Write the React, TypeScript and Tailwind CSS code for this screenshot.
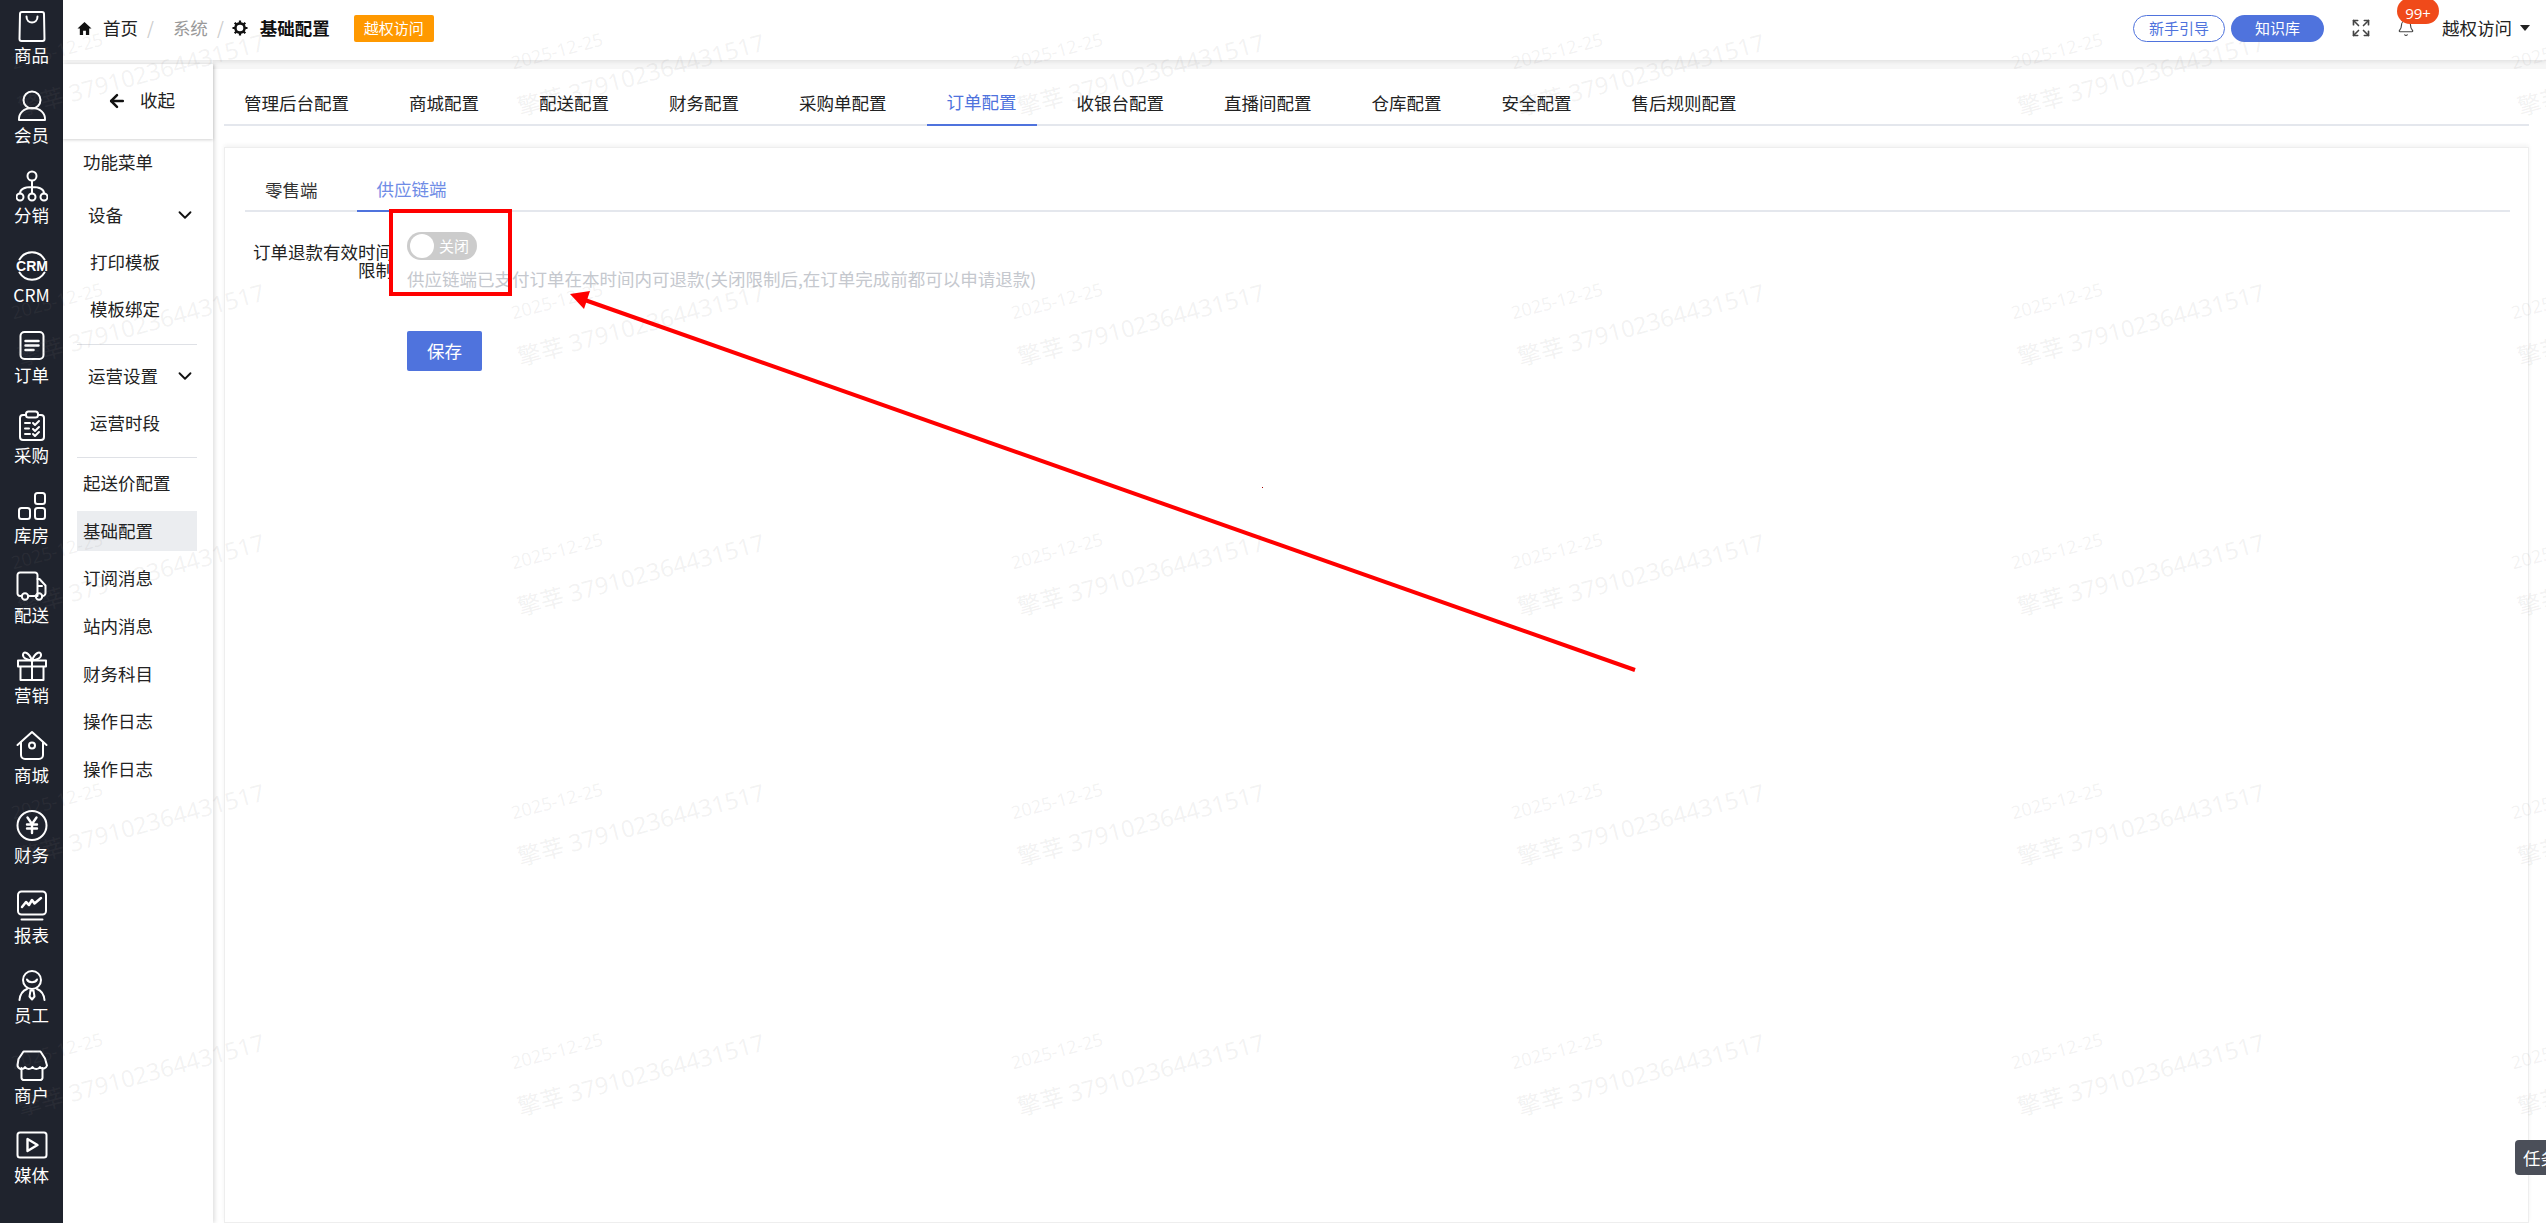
// App.tsx
// Order settings page: dark icon rail, settings menu, tabs and a refund toggle form
import type { ReactNode } from "react";
import { ArrowLeft, Bell, ChevronDown, Expand } from "lucide-react";

const FONT = "font-['Noto_Sans_CJK_SC','Noto_Sans',sans-serif]";

function Icon({ children }: { children: ReactNode }) {
  return (
    <svg
      viewBox="0 0 32 32"
      className="w-8 h-8"
      fill="none"
      stroke="#fff"
      strokeWidth="2"
      strokeLinecap="round"
      strokeLinejoin="round"
    >
      {children}
    </svg>
  );
}

const railItems: { label: string; icon: ReactNode }[] = [
  {
    label: "商品",
    icon: (
      <>
        <path d="M6 2h20a2 2 0 0 1 2 2l.5 25a2 2 0 0 1-2 2h-21a2 2 0 0 1-2-2L4 4a2 2 0 0 1 2-2z" />
        <path d="M10.500 6.500c0 8 11 8 11 0" />
      </>
    ),
  },
  {
    label: "会员",
    icon: (
      <>
        <circle cx="16" cy="10" r="8.500" />
        <path d="M3 30c-.5-7 5-12 13-12s13.500 5 13 12z" />
      </>
    ),
  },
  {
    label: "分销",
    icon: (
      <>
        <circle cx="16" cy="6" r="4.500" />
        <circle cx="4" cy="27" r="3.500" />
        <circle cx="16" cy="27" r="3.500" />
        <circle cx="28" cy="27" r="3.500" />
        <path d="M16 11v12.500M4 23.500c0-5 4-6.500 12-6.500s12 1.500 12 6.500" />
      </>
    ),
  },
  {
    label: "CRM",
    icon: (
      <>
        <path d="M3.500 9.500a14.500 14.500 0 0 1 25 0M3.500 22.500a14.500 14.500 0 0 0 25 0" />
        <text
          x="16"
          y="20.500"
          textAnchor="middle"
          fill="#fff"
          stroke="none"
          fontSize="14"
          fontWeight="700"
          fontFamily="'Liberation Sans',sans-serif"
        >
          CRM
        </text>
      </>
    ),
  },
  {
    label: "订单",
    icon: (
      <>
        <rect x="4.500" y="2" width="23" height="27" rx="4" />
        <path d="M9.500 11h13M9.500 15.500h13M9.500 20h8" strokeWidth="2.500" />
      </>
    ),
  },
  {
    label: "采购",
    icon: (
      <>
        <path d="M10 5H7a3 3 0 0 0-3 3v19a3 3 0 0 0 3 3h18a3 3 0 0 0 3-3V8a3 3 0 0 0-3-3h-3" />
        <rect x="10" y="1.500" width="12" height="6" rx="2.500" />
        <path d="M9 13h5M9 18.500h4M9 24h5M17 13l2 2 4-4M17 19l2 2 4-4M17 24l2 2 4-4" />
      </>
    ),
  },
  {
    label: "库房",
    icon: (
      <>
        <rect x="3" y="18" width="11" height="11" rx="2.500" />
        <rect x="19" y="18" width="10" height="11" rx="2.500" />
        <rect x="19" y="3" width="10" height="11" rx="2.500" />
      </>
    ),
  },
  {
    label: "配送",
    icon: (
      <>
        <path d="M6 26H4a2.500 2.500 0 0 1-2.500-2.500V5A2.500 2.500 0 0 1 4 2.500h15a2.500 2.500 0 0 1 2.500 2.500v21H12" />
        <path d="M21.500 9h2l6 6.500V23a3 3 0 0 1-3 3H26" />
        <path d="M22 16h4" />
        <circle cx="9" cy="26.500" r="3.200" />
        <circle cx="23" cy="26.500" r="3.200" />
      </>
    ),
  },
  {
    label: "营销",
    icon: (
      <>
        <path d="M2 10.500h28v6H2zM4.500 16.500V30h23V16.500M16 10.500V30" />
        <path d="M16 10.500C11 10 6.500 8 7 4.500S13 2 16 10.500zM16 10.500C21 10 25.500 8 25 4.500S19 2 16 10.500z" />
      </>
    ),
  },
  {
    label: "商城",
    icon: (
      <>
        <path d="M1.500 15 16 2l14.500 13" />
        <path d="M5 12.500V25a4 4 0 0 0 4 4h14a4 4 0 0 0 4-4V12.500" />
        <circle cx="16" cy="15.500" r="3" />
      </>
    ),
  },
  {
    label: "财务",
    icon: (
      <>
        <circle cx="16" cy="15.500" r="14.500" />
        <path d="M11.500 7.500 16 14l4.500-6.500M11 14.500h10M11 18.500h10M16 14v9" strokeWidth="2.400" />
      </>
    ),
  },
  {
    label: "报表",
    icon: (
      <>
        <rect x="2" y="1.500" width="28" height="23" rx="3.500" />
        <path d="M6 17l4-5 3 3 3-5 2.500 3.500L25 8" strokeWidth="2.500" />
        <path d="M5.500 29.500h21" />
      </>
    ),
  },
  {
    label: "员工",
    icon: (
      <>
        <circle cx="16" cy="10" r="9" />
        <path d="M11 9.500c1.500 3.500 8.500 3.500 10 0" />
        <path d="M3.500 30c.5-5 3.500-9.500 7.500-11M28.500 30c-.5-5-3.500-9.500-7.500-11" />
        <path d="M14.500 20.500h3l1 6-2.500 3-2.500-3z" />
      </>
    ),
  },
  {
    label: "商户",
    icon: (
      <>
        <path d="M7.500 1.500h17l4.500 7 2 7a4 4 0 0 1-7 1.500 4.500 4.500 0 0 1-7.500 0 4.500 4.500 0 0 1-7.500 0A4 4 0 0 1 1.500 15l1-6z" />
        <path d="M5.500 18v10a2.500 2.500 0 0 0 2.500 2h16a2.500 2.500 0 0 0 2.500-2V18" />
      </>
    ),
  },
  {
    label: "媒体",
    icon: (
      <>
        <rect x="1.500" y="2.500" width="29" height="25" rx="2.500" />
        <path d="M11.500 9v12l10-6z" strokeWidth="2.400" />
      </>
    ),
  },
];

const topTabs = [
  "管理后台配置",
  "商城配置",
  "配送配置",
  "财务配置",
  "采购单配置",
  "订单配置",
  "收银台配置",
  "直播间配置",
  "仓库配置",
  "安全配置",
  "售后规则配置",
];

const lowerMenu = ["起送价配置", "基础配置", "订阅消息", "站内消息", "财务科目", "操作日志", "操作日志"];

function Rail() {
  return (
    <aside className="w-[63px] shrink-0 bg-[#1f232d] flex flex-col text-white">
      {railItems.map((item) => (
        <div key={item.label} className="h-20 shrink-0 pt-[10px] flex flex-col items-center">
          <Icon>{item.icon}</Icon>
          <span className="mt-1 text-[17.5px] leading-[18px] whitespace-nowrap">{item.label}</span>
        </div>
      ))}
    </aside>
  );
}

function Header() {
  return (
    <header className="relative z-20 h-[60px] shrink-0 bg-white shadow-[0_2px_4px_rgba(0,0,0,0.08)] flex items-center pb-1 pl-[14px] pr-4 text-[17.5px] text-[#222]">
      <svg viewBox="0 0 16 16" className="w-[15px] h-[15px]" fill="#111">
        <path d="M8 1 .5 8H3v7h3.500v-4.500h3V15H13V8h2.500z" />
      </svg>
      <span className="ml-[11px]">首页</span>
      <span className="ml-[9px] text-[#ccc]">/</span>
      <span className="ml-[19px] text-[#999]">系统</span>
      <span className="ml-[9px] text-[#ccc]">/</span>
      {/* Round cog with eight short teeth */}
      <svg viewBox="0 0 16 16" className="ml-[8px] w-4 h-4" fill="none" stroke="#111">
        <circle cx="8" cy="8" r="4.600" strokeWidth="2.600" />
        <path
          d="M8 .5v2.500M8 13v2.500M.5 8H3M13 8h2.500M2.700 2.700l1.800 1.800M11.500 11.500l1.800 1.800M13.300 2.700l-1.800 1.800M4.500 11.500l-1.800 1.800"
          strokeWidth="2.200"
        />
      </svg>
      <span className="ml-3 font-bold text-[#111]">基础配置</span>
      <span className="ml-6 w-20 h-[27px] rounded-[2px] bg-[#ff9900] text-white text-[15px] flex items-center justify-center">
        越权访问
      </span>

      <div className="ml-auto flex items-center">
        <span className="w-[92px] h-[27px] rounded-full border border-[#4f73dd] text-[#4f73dd] text-[15px] flex items-center justify-center">
          新手引导
        </span>
        <span className="ml-[6px] w-[93px] h-[27px] rounded-full bg-[#4f73dd] text-white text-[15px] flex items-center justify-center">
          知识库
        </span>
        <Expand className="ml-[27px] text-[#444]" size={20} strokeWidth={2} />
        <div className="relative ml-[26px] w-[18px] h-[18px]">
          <Bell size={18} className="text-[#444]" strokeWidth={1.5} />
          <span className="absolute left-0 top-[-21px] w-[42px] h-[26px] pt-[5px] rounded-full bg-[#f04a1a] text-white text-[15px] leading-[20px] text-center font-['Open_Sans',sans-serif]">
            99+
          </span>
        </div>
        <span className="ml-[27px]">越权访问</span>
        <svg viewBox="0 0 10 6" className="ml-2 w-[10px] h-[6px]" fill="#222">
          <path d="M0 0h10L5 6z" />
        </svg>
      </div>
    </header>
  );
}

function SideMenu() {
  return (
    <nav className="relative z-10 w-[150px] shrink-0 mt-1 bg-white shadow-[2px_0_4px_rgba(0,0,0,0.12)] text-[17.5px] text-[#222]">
      <div className="h-[75px] pb-[2px] flex items-center pl-11 gap-[13px] shadow-[0_1px_3px_rgba(0,0,0,0.18)]">
        <ArrowLeft size={20} strokeWidth={3} className="text-[#111]" />
        <span>收起</span>
      </div>

      <div className="h-[46px] flex items-center pl-5">功能菜单</div>

      <div className="mt-[6px] h-12 flex items-center justify-between pl-[25px] pr-[17px]">
        设备
        <ChevronDown size={22} strokeWidth={2} className="text-[#111]" />
      </div>
      <div className="h-[47px] flex items-center pl-[27px]">打印模板</div>
      <div className="h-[47px] flex items-center pl-[27px]">模板绑定</div>
      <div className="mt-[11px] mx-[14px] w-[120px] h-[1px] bg-[#dfe1e6]" />

      <div className="mt-[7px] h-12 flex items-center justify-between pl-[25px] pr-[17px]">
        运营设置
        <ChevronDown size={22} strokeWidth={2} className="text-[#111]" />
      </div>
      <div className="h-[47px] flex items-center pl-[27px]">运营时段</div>
      <div className="mt-[10px] mx-[14px] w-[120px] h-[1px] bg-[#dfe1e6]" />

      <div className="mt-[5px] flex flex-col gap-[7.7px]">
        {lowerMenu.map((name, i) => (
          <div
            key={i}
            className={
              name === "基础配置"
                ? "mx-[14px] w-[120px] h-10 flex items-center pl-[6px] bg-[#ebedf0]"
                : "mx-[14px] w-[120px] h-10 flex items-center pl-[6px]"
            }
          >
            {name}
          </div>
        ))}
      </div>
    </nav>
  );
}

function RefundForm() {
  return (
    <div className="flex">
      <div className="w-[148px] pt-[31px] text-right text-[17.5px] leading-[18px] text-[#222]">
        订单退款有效时间限制
      </div>
      <div className="ml-[14px] pt-5">
        <div className="w-[70px] h-7 rounded-full bg-[#cccccc] flex items-center pl-[3px] gap-[5px]">
          <span className="w-6 h-6 rounded-full bg-white" />
          <span className="text-[15px] text-white">关闭</span>
        </div>
        <p className="mt-[10px] text-[17.5px] leading-[18px] text-[#c5c8ce] whitespace-nowrap">
          供应链端已支付订单在本时间内可退款(关闭限制后,在订单完成前都可以申请退款)
        </p>
        <button className="mt-[43px] w-[75px] h-10 rounded-[2px] bg-[#4f73dd] text-white text-[17.5px]">
          保存
        </button>
      </div>
    </div>
  );
}

function Content() {
  return (
    <main className="flex-1 flex flex-col min-w-0">
      <div className="h-[9px] shrink-0 bg-[#f6f6f6]" />
      <div className="flex flex-col flex-1 pl-[11px] pr-[17px]">
        {/* Top level settings tabs */}
        <div className="h-[57px] shrink-0 flex gap-5 border-b-2 border-[#e4e7ed] text-[17.5px] text-[#222]">
          {topTabs.map((tab) => (
            <div
              key={tab}
              className={
                tab === "订单配置"
                  ? "h-[57px] px-5 pt-3 flex items-center border-b-2 border-[#4f73dd] text-[#4f73dd] whitespace-nowrap"
                  : "h-[57px] px-5 pt-3 flex items-center whitespace-nowrap"
              }
            >
              {tab}
            </div>
          ))}
        </div>

        <section className="mt-[21px] flex-1 border border-[#eeeeee] shadow-[0_-2px_4px_rgba(0,0,0,0.05)] pl-5 pr-[18px]">
          <div className="h-[64px] flex gap-[19px] border-b-2 border-[#e4e7ed] text-[17.5px]">
            <div className="h-[64px] px-5 pt-5 flex items-center text-[#333]">零售端</div>
            <div className="h-[64px] px-5 pt-5 flex items-center border-b-2 border-[#4f73dd] text-[#6f8ce6]">
              供应链端
            </div>
          </div>
          <RefundForm />
        </section>
      </div>
    </main>
  );
}

// Tiled date and account watermark, one tile every 500x250
function Watermark() {
  return (
    <div className="absolute inset-0 z-30 overflow-hidden pointer-events-none grid grid-cols-[repeat(6,500px)] auto-rows-[250px] text-[rgba(130,130,130,0.11)] font-['Open_Sans','Noto_Sans_CJK_SC',sans-serif]">
      {Array.from({ length: 30 }).map((_, i) => (
        <div key={i} className="relative">
          <span className="absolute left-[57px] top-[51px] -translate-x-1/2 -translate-y-1/2 -rotate-[15deg] whitespace-nowrap text-[18px]">
            2025-12-25
          </span>
          <span className="absolute left-[141px] top-[75px] -translate-x-1/2 -translate-y-1/2 -rotate-[15deg] whitespace-nowrap text-[23.5px]">
            擎莘 379102364431517
          </span>
        </div>
      ))}
    </div>
  );
}

// Red marks someone drew on the screenshot
function Annotation() {
  return (
    <>
      <div className="absolute z-40 left-[389px] top-[209px] w-[123px] h-[87px] border-4 border-[#ff0000]" />
      <svg className="absolute z-40 inset-0 w-full h-full pointer-events-none" viewBox="0 0 2546 1223">
        <line x1="1635" y1="670" x2="582" y2="299" stroke="#ff0000" strokeWidth="4" />
        <polygon points="570,294 590,291 584,309" fill="#ff0000" />
        <rect x="1262" y="487" width="1" height="1" fill="#a00000" />
      </svg>
    </>
  );
}

export default function App() {
  return (
    <div className={`relative w-[2546px] h-[1223px] overflow-hidden flex bg-white ${FONT}`}>
      <Rail />
      <div className="flex-1 flex flex-col min-w-0">
        <Header />
        <div className="flex-1 flex min-h-0">
          <SideMenu />
          <Content />
        </div>
      </div>
      <div className="absolute z-20 right-0 top-[1140px] w-[31px] h-[35px] pl-2 rounded-l-[4px] bg-[#4b4f59] text-white text-[17.5px] leading-[35px] whitespace-nowrap overflow-hidden">
        任务
      </div>
      <Watermark />
      <Annotation />
    </div>
  );
}
